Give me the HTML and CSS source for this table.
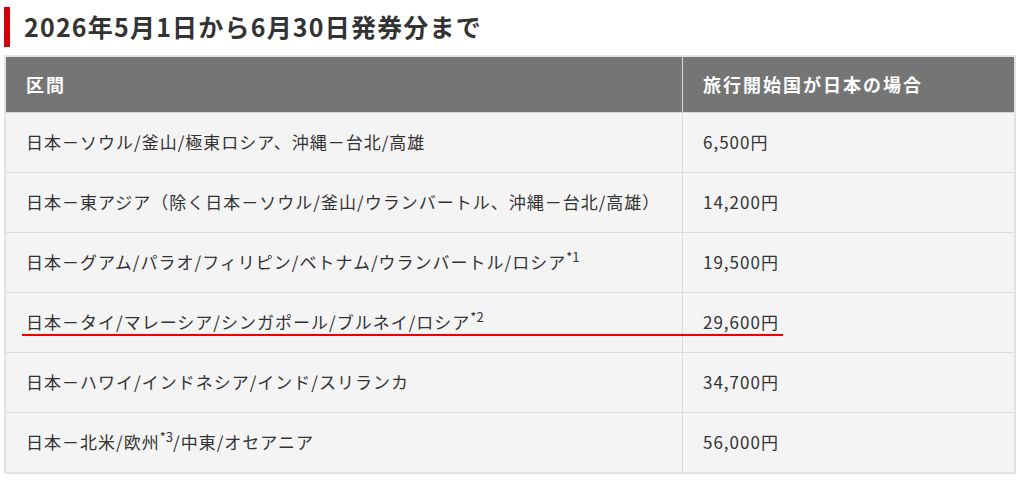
FILE: index.html
```html
<!DOCTYPE html>
<html lang="ja">
<head>
<meta charset="utf-8">
<link rel="stylesheet" href="styles.css">
</head>
<body>
<div class="page">
  <h2 class="title">2026年5月1日から6月30日発券分まで</h2>
  <div class="table-wrap">
    <table class="fares">
      <thead>
        <tr><th class="c1">区間</th><th class="c2">旅行開始国が日本の場合</th></tr>
      </thead>
      <tbody>
        <tr><td>日本－ソウル/釜山/極東ロシア、沖縄－台北/高雄</td><td>6,500円</td></tr>
        <tr><td>日本－東アジア（除く日本－ソウル/釜山/ウランバートル、沖縄－台北/高雄）</td><td>14,200円</td></tr>
        <tr><td>日本－グアム/パラオ/フィリピン/ベトナム/ウランバートル/ロシア<sup>*1</sup></td><td>19,500円</td></tr>
        <tr><td>日本－タイ/マレーシア/シンガポール/ブルネイ/ロシア<sup>*2</sup></td><td>29,600円</td></tr>
        <tr><td>日本－ハワイ/インドネシア/インド/スリランカ</td><td>34,700円</td></tr>
        <tr><td>日本－北米/欧州<sup>*3</sup>/中東/オセアニア</td><td>56,000円</td></tr>
      </tbody>
    </table>
    <div class="mark"></div>
  </div>
</div>
</body>
</html>
```
FILE: styles.css
```css
html, body { margin: 0; padding: 0; background: #fff; }
body {
  font-family: "Noto Sans CJK JP", "Noto Sans", sans-serif;
  color: #333;
}
.page { padding: 7px 8px 0 4px; }
.title {
  margin: 0 0 8px 0;
  border-left: 6px solid #d0000b;
  padding-left: 14px;
  height: 40px;
  line-height: 38px;
  font-size: 25px;
  font-weight: bold;
  letter-spacing: 1.2px;
  color: #333;
}
.table-wrap { position: relative; width: 1012px; }
.fares {
  width: 100%;
  border-collapse: collapse;
  border: 2px solid #e2e2e2;
  font-size: 17px;
  letter-spacing: 1px;
}
.fares th {
  background: #757575;
  color: #fff;
  font-weight: bold;
  font-size: 18px;
  letter-spacing: 2px;
  text-align: left;
  height: 53px;
  padding: 0 20px 2px;
  border: 1px solid #d8d8d8;
  border-top: none;
}
.fares th.c1 { width: 636px; }
.fares td {
  background: #f4f4f4;
  height: 56px;
  padding: 0 20px 3px;
  border: 1px solid #dcdcdc;
  color: #333;
}
.fares sup { font-size: 13px; letter-spacing: 0; line-height: 0; vertical-align: 7px; }
.mark {
  position: absolute;
  left: 18px;
  top: 279px;
  width: 761px;
  height: 2px;
  background: #f00000;
}
```
